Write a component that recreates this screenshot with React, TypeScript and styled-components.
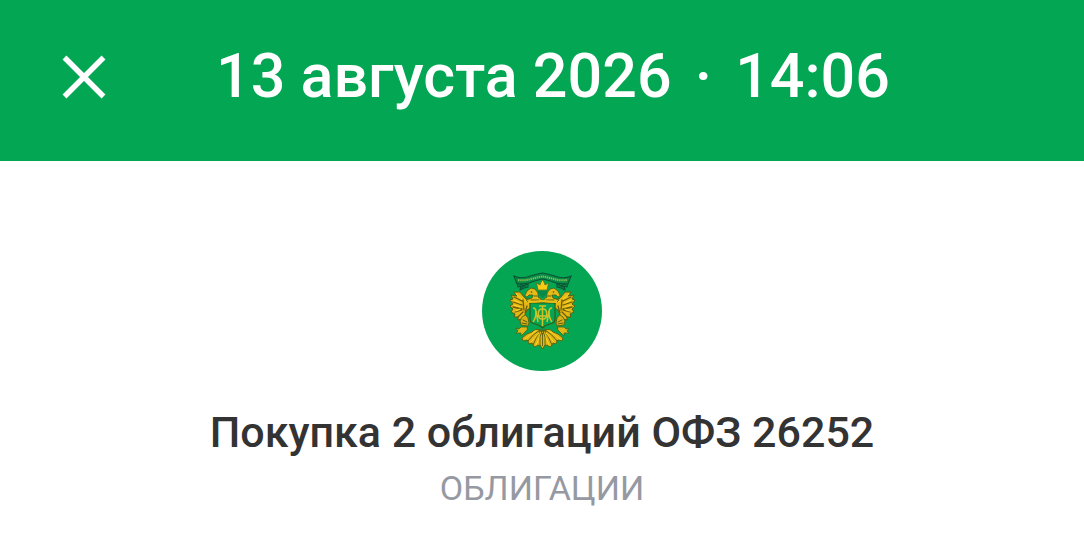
import React from 'react';
import styled, { createGlobalStyle } from 'styled-components';

const App = () => {
  return (
    <>
      <GlobalStyle />
      <Page>
        <Header>
          <CloseButton type="button" aria-label="Закрыть">
            <svg viewBox="0 0 48 48" width="48" height="48" aria-hidden="true">
              <path d="M4.5 5.5 43.5 44.5M43.5 5.5 4.5 44.5" stroke="#fff" strokeWidth="5.5" />
            </svg>
          </CloseButton>
          <DateTitle>13 августа 2026 <Dot>·</Dot> 14:06</DateTitle>
        </Header>

        <Operation>
          <Emblem />
          <OperationTitle>Покупка 2 облигаций ОФЗ 26252</OperationTitle>
          <Category>ОБЛИГАЦИИ</Category>
        </Operation>
      </Page>
    </>
  )
}

// left half of the eagle, drawn a second time mirrored
const EagleHalf = () => (
  <g strokeLinejoin="round" strokeLinecap="round">
    {/* ribbon end */}
    <path d="M15 15 16 21 19 20 18 24 22 22 26 21 26 17 28 15" fill="#078a49" stroke="#0b5433" strokeWidth="1.2" />
    <path d="M18 18 23 20M20 21 25 18" stroke="#0b5433" strokeWidth="1.2" />

    {/* wing */}
    <path
      d="M28 33 24 33 22 31 18 26 12 26 15 30 9 29 11 33 8 34 11 38 8 40 11 43 9 46 13 48 12 51 16 51 16 54 20 53 23 49 25 44 28 42Z"
      fill="#e3b814"
      stroke="#5a600f"
      strokeWidth="1"
    />
    <path
      d="M12 31 20 35M11 36 20 39M11 41 20 43M13 46 20 44M16 51 21 46M21 34 22 44M25 40 23 47"
      stroke="#6a5c0c"
      strokeWidth="1.3"
      fill="none"
    />
    <path d="M14 28 20 33M12 34 18 37M12 39 18 41M14 45 18 43M23 35 27 36" stroke="#ffd52a" strokeWidth="1" />

    {/* head and neck */}
    <path
      d="M23 29 25 25 29 22 33 23 36 27 36 31 39 33 39 37 27 37 24 34 30 32 31 29 27 29 25 31Z"
      fill="#e6bb18"
      stroke="#4e6414"
      strokeWidth=".9"
    />
    <path d="M32 30 35 30M29 34 37 34" stroke="#695f0d" strokeWidth="1" />
    <circle cx="29.500" cy="26" r=".8" fill="#39551b" />

    {/* helmet and claw */}
    <path
      d="M23 49 20 51 18 55 19 59 26 60 27 57 26 52Z"
      fill="#d8b019"
      stroke="#4e6414"
      strokeWidth=".9"
    />
    <path d="M21 54 25 56M20 57 25 58" stroke="#665c0c" strokeWidth="1" />
    <path
      d="M25 61 21 61 19 61 17 63 14 62 16 65 14 67 19 67 19 70 22 67 25 64Z"
      fill="#e0b818"
      stroke="#4e6414"
      strokeWidth=".8"
    />

    {/* tail plumes */}
    <g fill="#dfb414" stroke="#5a600f" strokeWidth=".9">
      <path d="M38 64Q33 62 30 66Q25 67 20 72L21 75 25 74 26 75Q29 71 38 64Z" />
      <path d="M38 64Q31 68 26 75L27 78 30 77 31 79 35 73Z" />
      <path d="M39 64Q34 71 31 79L33 81 36 79 38 80 40 71Z" />
    </g>
    <path d="M34 65 28 69 23 73M37 67 29 76M38 70 34 79" stroke="#ffd52a" strokeWidth="1" fill="none" />
  </g>
)

const Emblem = () => (
  <EmblemImage viewBox="0 0 120 120" role="img" aria-label="Министерство финансов">
    <circle cx="60" cy="60" r="60" fill="#04a653" />
    <g transform="translate(20 15)" fill="none">
      <EagleHalf />
      <g transform="translate(81 0) scale(-1 1)">
        <EagleHalf />
      </g>

      {/* ribbon */}
      <path
        d="M12 10Q18 13 25 11Q34 8 40.500 7Q47 8 56 11Q63 13 69 10L66 18Q60 18 54 17Q46 14 40.500 13Q35 14 27 17Q21 18 15 18Z"
        fill="#088b49"
        stroke="#0b5433"
        strokeWidth="1.1"
      />
      <path d="M16 14Q23 15 29 13Q36 11 40.500 10.500Q45 11 52 13Q58 15 65 14" stroke="#83bd4c" strokeWidth="2" strokeDasharray="1.4 .7" />

      {/* crown */}
      <path d="M36 24 34.500 17 38 19 39 16 40.500 14 42 16 43 19 46.500 17 45 24Z" fill="#f7cc17" stroke="#5c6811" strokeWidth=".7" />
      <path d="M36 25H45L45 28 40.500 32 36 28Z" fill="#078a49" />

      {/* shield */}
      <path d="M28 37H53V53Q53 57 48 58Q43 59 40.500 62Q38 59 33 58Q28 57 28 53Z" fill="#04a653" stroke="#315f1b" strokeWidth="1.2" />
      <path d="M26 36Q34 36 40.500 35Q47 36 55 36" stroke="#e9c018" strokeWidth="2" />

      {/* monogram */}
      <g stroke="#cfc228" strokeWidth="1.500">
        <path d="M31 42Q34 42 34 46Q34 52 31 56M50 42Q47 42 47 46Q47 52 50 56M37 40H44M40.500 40V60" />
        <path d="M34 45 36 56M47 45 45 56M34 50H47" />
        <path d="M40 43C35 43 35 53 40 53M41 43C46 43 46 53 41 53" />
      </g>

      {/* middle feather */}
      <path d="M40.500 64 38 71 38 79 40.500 83 43 79 43 71Z" fill="#e3b814" stroke="#4e6414" strokeWidth=".9" />
      <path d="M40.500 67V80" stroke="#6c6510" />
    </g>
  </EmblemImage>
)

const GlobalStyle = createGlobalStyle`
  * {
    box-sizing: border-box;
  }

  body {
    margin: 0;
    background-color: #fff;
    font-family: Roboto, "Noto Sans", sans-serif;
  }
`

const Page = styled.main`
  display: flex;
  flex-direction: column;
  min-height: 100vh;
`

const Header = styled.header`
  display: flex;
  align-items: center;
  padding: 40px 86px 49px 60px;
  background-color: #02a653;
`

const CloseButton = styled.button`
  display: flex;
  flex-shrink: 0;
  padding: 0;
  border: none;
  background: none;
  cursor: pointer;
`

const DateTitle = styled.h1`
  flex: 1;
  margin: 0;
  color: #fff;
  font-size: 61px;
  font-weight: 500;
  line-height: 72px;
  text-align: center;
`

const Dot = styled.span`
  margin: 0 8px;
`

const Operation = styled.section`
  display: flex;
  flex-direction: column;
  align-items: center;
  padding: 90px 40px 32px;
  text-align: center;
`

const EmblemImage = styled.svg`
  width: 120px;
  height: 120px;
`

const OperationTitle = styled.h2`
  margin: 35px 0 0;
  color: #333;
  font-size: 43px;
  font-weight: 500;
  line-height: 52px;
`

const Category = styled.p`
  margin: 8px 0 0;
  color: #9699a2;
  font-size: 34px;
  font-weight: 400;
  line-height: 44px;
`

export default App;
